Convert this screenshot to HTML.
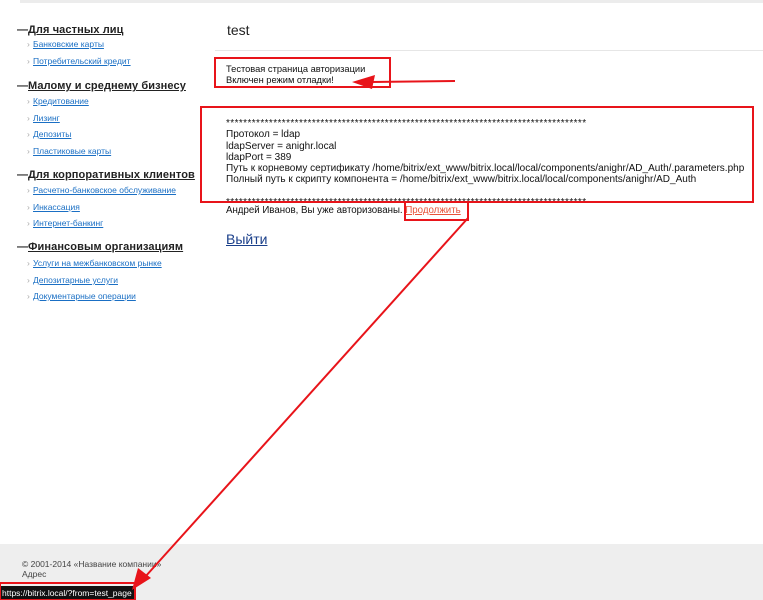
<!DOCTYPE html>
<html><head><meta charset="utf-8"><style>
body{margin:0;width:763px;height:600px;position:relative;overflow:hidden;background:#fff;font-family:"Liberation Sans",Arial,sans-serif;}
.a{position:absolute;white-space:nowrap}
.h{font-size:11px;font-weight:bold;color:#222;text-decoration:underline;letter-spacing:0.1px}
.h span{text-decoration:none;display:inline-block;width:11px}
.l{font-size:8.5px;color:#1a6fc4;text-decoration:underline}
.l:before{content:"›";color:#aaa;text-decoration:none;display:inline-block;width:6px;margin-left:-7px}
.t{font-size:9.3px;color:#111;line-height:11.3px}
.s{display:block;width:360px;overflow:hidden;letter-spacing:0.4px}
</style></head><body>
<div class="a" style="left:20px;top:0;width:743px;height:3px;background:#ececec"></div>
<div class="a" style="left:215px;top:50px;width:548px;height:1px;background:#e6e6e6"></div>
<div class="a" style="left:0;top:544px;width:763px;height:56px;background:#eeeeee"></div>

<div class="a h" style="left:17px;top:24px"><span>—</span>Для частных лиц</div>
<div class="a l" style="left:34px;top:39px">Банковские карты</div>
<div class="a l" style="left:34px;top:56px">Потребительский кредит</div>
<div class="a h" style="left:17px;top:80px"><span>—</span>Малому и среднему бизнесу</div>
<div class="a l" style="left:34px;top:96px">Кредитование</div>
<div class="a l" style="left:34px;top:113px">Лизинг</div>
<div class="a l" style="left:34px;top:129px">Депозиты</div>
<div class="a l" style="left:34px;top:146px">Пластиковые карты</div>
<div class="a h" style="left:17px;top:169px"><span>—</span>Для корпоративных клиентов</div>
<div class="a l" style="left:34px;top:185px">Расчетно-банковское обслуживание</div>
<div class="a l" style="left:34px;top:202px">Инкассация</div>
<div class="a l" style="left:34px;top:218px">Интернет-банкинг</div>
<div class="a h" style="left:17px;top:241px"><span>—</span>Финансовым организациям</div>
<div class="a l" style="left:34px;top:258px">Услуги на межбанковском рынке</div>
<div class="a l" style="left:34px;top:275px">Депозитарные услуги</div>
<div class="a l" style="left:34px;top:291px">Документарные операции</div>

<div class="a" style="left:227px;top:22px;font-size:14px;color:#222">test</div>
<div class="a t" style="left:226px;top:64px">Тестовая страница авторизации<br>Включен режим отладки!</div>
<div class="a t" style="left:226px;top:118px;font-size:10px"><span class="s">*****************************************************************************************************</span>Протокол = ldap<br>ldapServer = anighr.local<br>ldapPort = 389<br>Путь к корневому сертификату /home/bitrix/ext_www/bitrix.local/local/components/anighr/AD_Auth/.parameters.php<br>Полный путь к скрипту компонента = /home/bitrix/ext_www/bitrix.local/local/components/anighr/AD_Auth<br><br><span class="s">*****************************************************************************************************</span></div>
<div class="a t" style="left:226px;top:205px;font-size:9.7px">Андрей Иванов, Вы уже авторизованы. <span style="color:#e8533a;text-decoration:underline">Продолжить</span></div>
<div class="a" style="left:226px;top:231px;font-size:14px;color:#1a3f8a;text-decoration:underline">Выйти</div>

<div class="a" style="left:22px;top:559px;font-size:8.5px;color:#444;line-height:10px">© 2001-2014 «Название компании»<br>Адрес</div>
<div class="a" style="left:0;top:586px;width:132px;height:14px;background:#111;color:#fff;font-size:8.5px;line-height:14px;padding-left:2px">https://bitrix.local/?from=test_page</div>

<svg class="a" style="left:0;top:0" width="763" height="600">
<g fill="none" stroke="#e8141a" stroke-width="2">
<rect x="215" y="58" width="175" height="29"/>
<rect x="201" y="107" width="552" height="95"/>
<rect x="405" y="202" width="63" height="18"/>
<rect x="0" y="583" width="135" height="17"/>
<line x1="455" y1="81" x2="370" y2="82"/>
<line x1="468" y1="218" x2="145" y2="577"/>
</g>
<g fill="#e8141a">
<polygon points="352,82 375,75 372,89"/>
<polygon points="132,590 138,568 151,578"/>
</g>
</svg>
</body></html>
